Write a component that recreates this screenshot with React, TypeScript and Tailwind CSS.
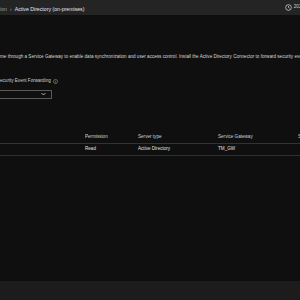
import React from "react";

export default function App() {
  return (
    <div
      className="w-[300px] h-[300px] overflow-hidden bg-[#0f0f0f] flex flex-col text-[4.6px] leading-none"
      style={{ fontFamily: '"Liberation Sans", Arial, sans-serif' }}
    >
      {/* header */}
      <div className="h-[15px] shrink-0 bg-[#242424] flex items-center justify-between pt-[4px]">
        <div className="flex items-center gap-[3px] whitespace-nowrap text-[5.2px]">
          <span className="text-[#9a9a9a]">ion</span>
          <span className="text-[#9a9a9a]">›</span>
          <span className="text-[#e6e6e6]">Active Directory (on-premises)</span>
        </div>
        <div className="flex items-center gap-[2px] whitespace-nowrap -mr-[4px] -mt-[4px]">
          <svg width="7" height="7" viewBox="0 0 16 16" fill="none" stroke="#cfcfcf" strokeWidth="1.8">
            <circle cx="8" cy="8" r="6.5" />
            <path d="M8 4.5V8l2.5 1.5" />
          </svg>
          <span className="text-[#cfcfcf]">2023</span>
        </div>
      </div>

      {/* body */}
      <div className="flex-1 flex flex-col">
        <p className="mt-[40px] whitespace-nowrap text-[#d6d6d6]">
          me through a Service Gateway to enable data synchronization and user access control. Install the Active Directory Connector to forward security events
        </p>

        <div className="mt-[19px] flex items-center gap-[2px] whitespace-nowrap text-[#d0d0d0]">
          <span>ecurity Event Forwarding</span>
          <svg width="5" height="5" viewBox="0 0 16 16" fill="none" stroke="#bdbdbd" strokeWidth="1.5">
            <circle cx="8" cy="8" r="6.5" />
            <path d="M8 7v4.5M8 4.5v.8" />
          </svg>
        </div>

        <div className="mt-[6px] w-[52px] h-[9px] border border-l-0 border-[#5a5a5a] rounded-r-[1px] flex items-center justify-end pr-[5px]">
          <svg width="5" height="4" viewBox="0 0 10 6" fill="none" stroke="#d0d0d0" strokeWidth="1.6">
            <path d="M1 1l4 4 4-4" />
          </svg>
        </div>

        {/* table */}
        <div className="mt-[33px]">
          <div className="h-[12px] flex items-center text-[#cfcfcf] whitespace-nowrap border-b border-[#333333]">
            <span className="w-[85px] shrink-0" />
            <span className="w-[53px] shrink-0">Permission</span>
            <span className="w-[80px] shrink-0">Server type</span>
            <span className="w-[80px] shrink-0">Service Gateway</span>
            <span className="shrink-0">Status</span>
          </div>
          <div className="h-[12px] flex items-center text-[#e0e0e0] whitespace-nowrap border-b border-[#2e2e2e]">
            <span className="w-[85px] shrink-0" />
            <span className="w-[53px] shrink-0">Read</span>
            <span className="w-[80px] shrink-0">Active Directory</span>
            <span className="w-[80px] shrink-0">TM_GW</span>
          </div>
        </div>
      </div>

      {/* footer */}
      <div className="h-[19px] shrink-0 bg-[#1c1c1c]" />
    </div>
  );
}
